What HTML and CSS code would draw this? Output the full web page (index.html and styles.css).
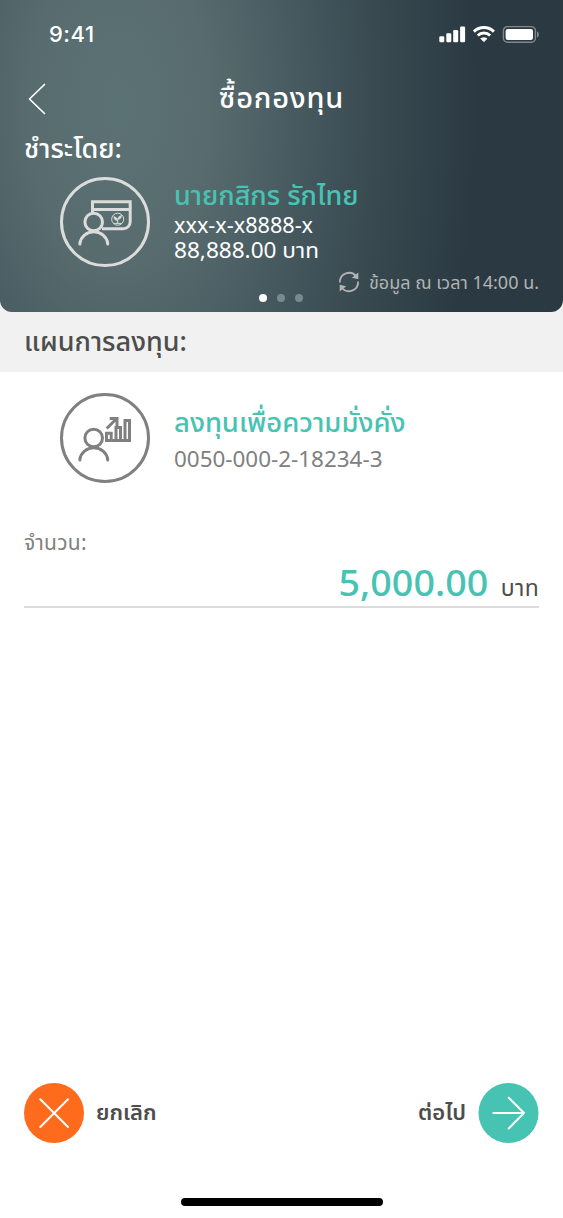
FILE: index.html
```
<!DOCTYPE html>
<html lang="th">
<head>
<meta charset="utf-8">
<title>ซื้อกองทุน</title>
<link rel="stylesheet" href="styles.css">
</head>
<body>
<main class="screen">
  <header class="hero">
    <div class="status">
      <span class="clock">9:41</span>
      <svg class="status-icons" width="102" height="20" viewBox="0 0 102 20">
        <g fill="#fff">
          <rect x="1.3" y="12.3" width="5" height="6" rx="1.2"/>
          <rect x="8.3" y="9.2" width="5" height="9.1" rx="1.2"/>
          <rect x="15.2" y="6" width="5" height="12.3" rx="1.2"/>
          <rect x="22.1" y="2.4" width="5" height="15.9" rx="1.2"/>
          <path d="M42.800 14.500q3.100-1.300 6.200 0l-3.100 3.100z" stroke="#fff" stroke-width="1" stroke-linejoin="round"/>
        </g>
        <g fill="none" stroke="#fff" stroke-width="2.900">
          <path d="M39.700 11.500a9 9 0 0 1 12.400 0"/>
          <path d="M35.900 7.600a14.400 14.400 0 0 1 20 0"/>
        </g>
        <rect x="65.400" y="2.600" width="32" height="15.600" rx="4.200" fill="none" stroke="#fff" stroke-opacity=".4" stroke-width="1.400"/>
        <rect x="67.600" y="5" width="27.400" height="11" rx="2.200" fill="#fff"/>
        <path d="M99 7.500c2.600 1 2.600 5 0 6z" fill="#fff" fill-opacity=".4"/>
      </svg>
    </div>
    <div class="nav">
      <svg class="back" width="20" height="32" viewBox="0 0 20 32"><path d="M17.500 1.500L2.500 16l15 14.500" fill="none" stroke="#fff" stroke-width="1.700" stroke-linecap="round" stroke-linejoin="round"/></svg>
      <h1 class="title"><span class="t t-title">ซื้อกองทุน</span></h1>
    </div>
    <p class="pay"><span class="t t-pay">ชำระโดย:</span></p>
    <section class="account">
      <svg class="badge" width="90" height="90" viewBox="0 0 90 90" fill="none" stroke="#dcdcdc" stroke-width="3">
        <circle cx="45" cy="45" r="43.500"/>
        <path d="M32.500 37V24.800h37.700V44.800a7 7 0 0 1-7 7H42M32.500 32.400h37.700"/>
        <circle cx="33.700" cy="45" r="8.800"/>
        <path d="M19.900 67v-.500a14 13.200 0 0 1 27.800 0v.500" stroke-linecap="round"/>
        <g stroke-width="1">
          <circle cx="57.700" cy="42.200" r="6"/>
          <path d="M54 46.400h7.500M57.700 46v-4.500"/>
          <path d="M57.500 43.500c-3 0-3.600-1.700-3.700-4 2.200.4 3.700 1.500 3.700 4zM58 42.500c0-2.500 1.400-3.800 3.600-4.200 0 2.400-1 4-3.600 4.200z" fill="#dcdcdc" stroke-width=".4"/>
        </g>
      </svg>
      <div class="account-text">
        <p class="name"><span class="t t-name">นายกสิกร รักไทย</span></p>
        <p class="number"><span class="t t-acc">xxx-x-x8888-x</span></p>
        <p class="number"><span class="t t-bal">88,888.00 บาท</span></p>
      </div>
    </section>
    <div class="updated">
      <svg width="24" height="24" viewBox="0 0 24 24" fill="none" stroke="#b1b3b4" stroke-width="1.800"><path d="M2.900 12.500a9.200 9.200 0 0 1 16.500-6M21.100 11.500a9.200 9.200 0 0 1-16.500 6"/><path d="M21.300 2.500v6.700l-6.500-1.500zM2.700 21.500v-6.700l6.500 1.500z" fill="#b1b3b4" stroke="none"/></svg>
      <span class="t t-upd">ข้อมูล ณ เวลา 14:00 น.</span>
    </div>
    <div class="dots"><i class="dot on"></i><i class="dot"></i><i class="dot"></i></div>
  </header>
  <h2 class="section"><span class="t t-sec">แผนการลงทุน:</span></h2>
  <section class="plan">
    <svg class="badge" width="90" height="90" viewBox="0 0 90 90" fill="none" stroke="#808080" stroke-width="3">
      <circle cx="45" cy="45" r="43.500"/>
      <circle cx="33.700" cy="45" r="8.800"/>
      <path d="M19.900 67v-.500a14 13.200 0 0 1 27.800 0v.500" stroke-linecap="round"/>
      <path d="M46.500 47.500v-7.300h4.700v7.300M56 47.500V34.500h4.500v13M65 47.500V27.500h4.500v20M45 47.400h26"/>
      <path d="M46.700 35.500l9-9M49.700 25.600h7.300v7.300"/>
    </svg>
    <div class="plan-text">
      <p class="plan-name"><span class="t t-plan">ลงทุนเพื่อความมั่งคั่ง</span></p>
      <p class="plan-no"><span class="t t-no">0050-000-2-18234-3</span></p>
    </div>
  </section>
  <section class="amount">
    <p class="amount-label"><span class="t t-label">จำนวน:</span></p>
    <p class="amount-row"><span class="t t-value">5,000.00</span><span class="t t-unit">บาท</span></p>
  </section>
  <footer class="actions">
    <div class="action">
      <svg width="60" height="60" viewBox="0 0 60 60"><circle cx="30" cy="30" r="30" fill="#ff6b1c"/><path d="M16.300 16.300l27.700 27.700M44 16.300L16.300 44" stroke="#fff" stroke-width="2" stroke-linecap="round"/></svg>
      <span class="t t-cancel">ยกเลิก</span>
    </div>
    <div class="action">
      <span class="t t-next">ต่อไป</span>
      <svg width="61" height="60" viewBox="0 0 61 60"><circle cx="30.500" cy="30" r="30" fill="#47c3b3"/><path d="M15.300 30H46M30.700 14.700L46 30 30.700 45.500" fill="none" stroke="#fff" stroke-width="2" stroke-linecap="round" stroke-linejoin="round"/></svg>
    </div>
  </footer>
  <div class="home"></div>
</main>
</body>
</html>
```
FILE: styles.css
```
* { box-sizing: border-box; }
body, h1, h2, p { margin: 0; font-weight: 400; font-size: inherit; }
body { background: #fff; font-family: "Noto Sans", "Noto Sans Thai", "Noto Sans Thai Looped", sans-serif; }
.screen { width: 563px; height: 1218px; display: flex; flex-direction: column; background: linear-gradient(#f1f1f1 372px, #fff 372px); }
.t { display: inline-block; white-space: nowrap; transform-origin: left center; }
.hero { position: relative; height: 312px; border-radius: 0 0 12px 12px; color: #fff; background: radial-gradient(ellipse 360px 640px at 118px 105px, #5b7274 0%, #586c6f 25%, #485b61 48%, #37484f 75%, #2b3a42 100%); }
.status { height: 68px; padding: 0 23px 0 49px; display: flex; align-items: center; justify-content: space-between; }
.clock { font: 500 22px/68px Inter, sans-serif; letter-spacing: .5px; }
.nav { height: 60px; display: flex; align-items: center; padding: 2px 0 0 27px; }
.title { flex: 1; text-align: center; margin-right: 47px; line-height: 57px; }
.t-title { font-size: 29px; font-weight: 500; letter-spacing: .8px; }
.pay { padding-left: 24px; height: 40px; line-height: 39px; }
.t-pay { font-size: 27px; font-weight: 500; }
.account { display: flex; gap: 24px; padding: 9px 24px 0 60px; }
.badge { flex: none; display: block; }
.name { color: #47c3b3; height: 36px; line-height: 36px; }
.t-name { font-size: 27px; font-weight: 500; }
.number { height: 25px; line-height: 25px; }
.t-acc, .t-bal { font-size: 21px; }
.t-acc { transform: scaleX(1.03); }
.t-bal { transform: scaleX(1.075); }
.updated { display: flex; justify-content: flex-end; align-items: center; gap: 8px; height: 30px; padding-right: 24px; color: #b1b3b4; }
.t-upd { font-size: 18px; line-height: 28px; }
.dots { position: absolute; left: 259px; top: 294px; display: flex; gap: 10px; }
.dot { width: 8px; height: 8px; border-radius: 50%; background: #7b898e; }
.dot.on { background: #fff; }
.section { height: 60px; line-height: 58px; padding-left: 24px; color: #4d4d4d; }
.t-sec { font-size: 27px; font-weight: 500; }
.plan { height: 132px; padding: 21px 24px 0 60px; display: flex; gap: 24px; }
.plan-name { color: #47c3b3; height: 48px; line-height: 58px; }
.t-plan { font-size: 27px; font-weight: 500; transform: scaleX(1.016); }
.plan-no { color: #808080; line-height: 36px; }
.t-no { font-size: 21px; transform: scaleX(1.068); }
.amount { margin: 18px 24px 0; height: 86px; border-bottom: 2px solid #dcdcdc; }
.amount-label { height: 42px; line-height: 41px; color: #808080; }
.t-label { font-size: 21px; letter-spacing: .3px; }
.amount-row { display: flex; justify-content: flex-end; align-items: baseline; gap: 13px; line-height: 38px; }
.t-value { font-size: 36px; font-weight: 500; color: #47c3b3; transform: scaleX(1.045); transform-origin: right center; }
.t-unit { font-size: 23px; color: #4d4d4d; letter-spacing: .3px; }
.actions { margin-top: auto; display: flex; justify-content: space-between; padding: 0 24px; height: 115px; }
.action { height: 60px; display: flex; align-items: center; gap: 12px; color: #4d4d4d; }
.t-cancel, .t-next { font-size: 22px; font-weight: 600; line-height: 56px; padding-bottom: 4px; }
.home { width: 202px; height: 8px; border-radius: 4px; background: #000; margin: 0 auto 12px; }
.home, .actions { flex: none; }
```
